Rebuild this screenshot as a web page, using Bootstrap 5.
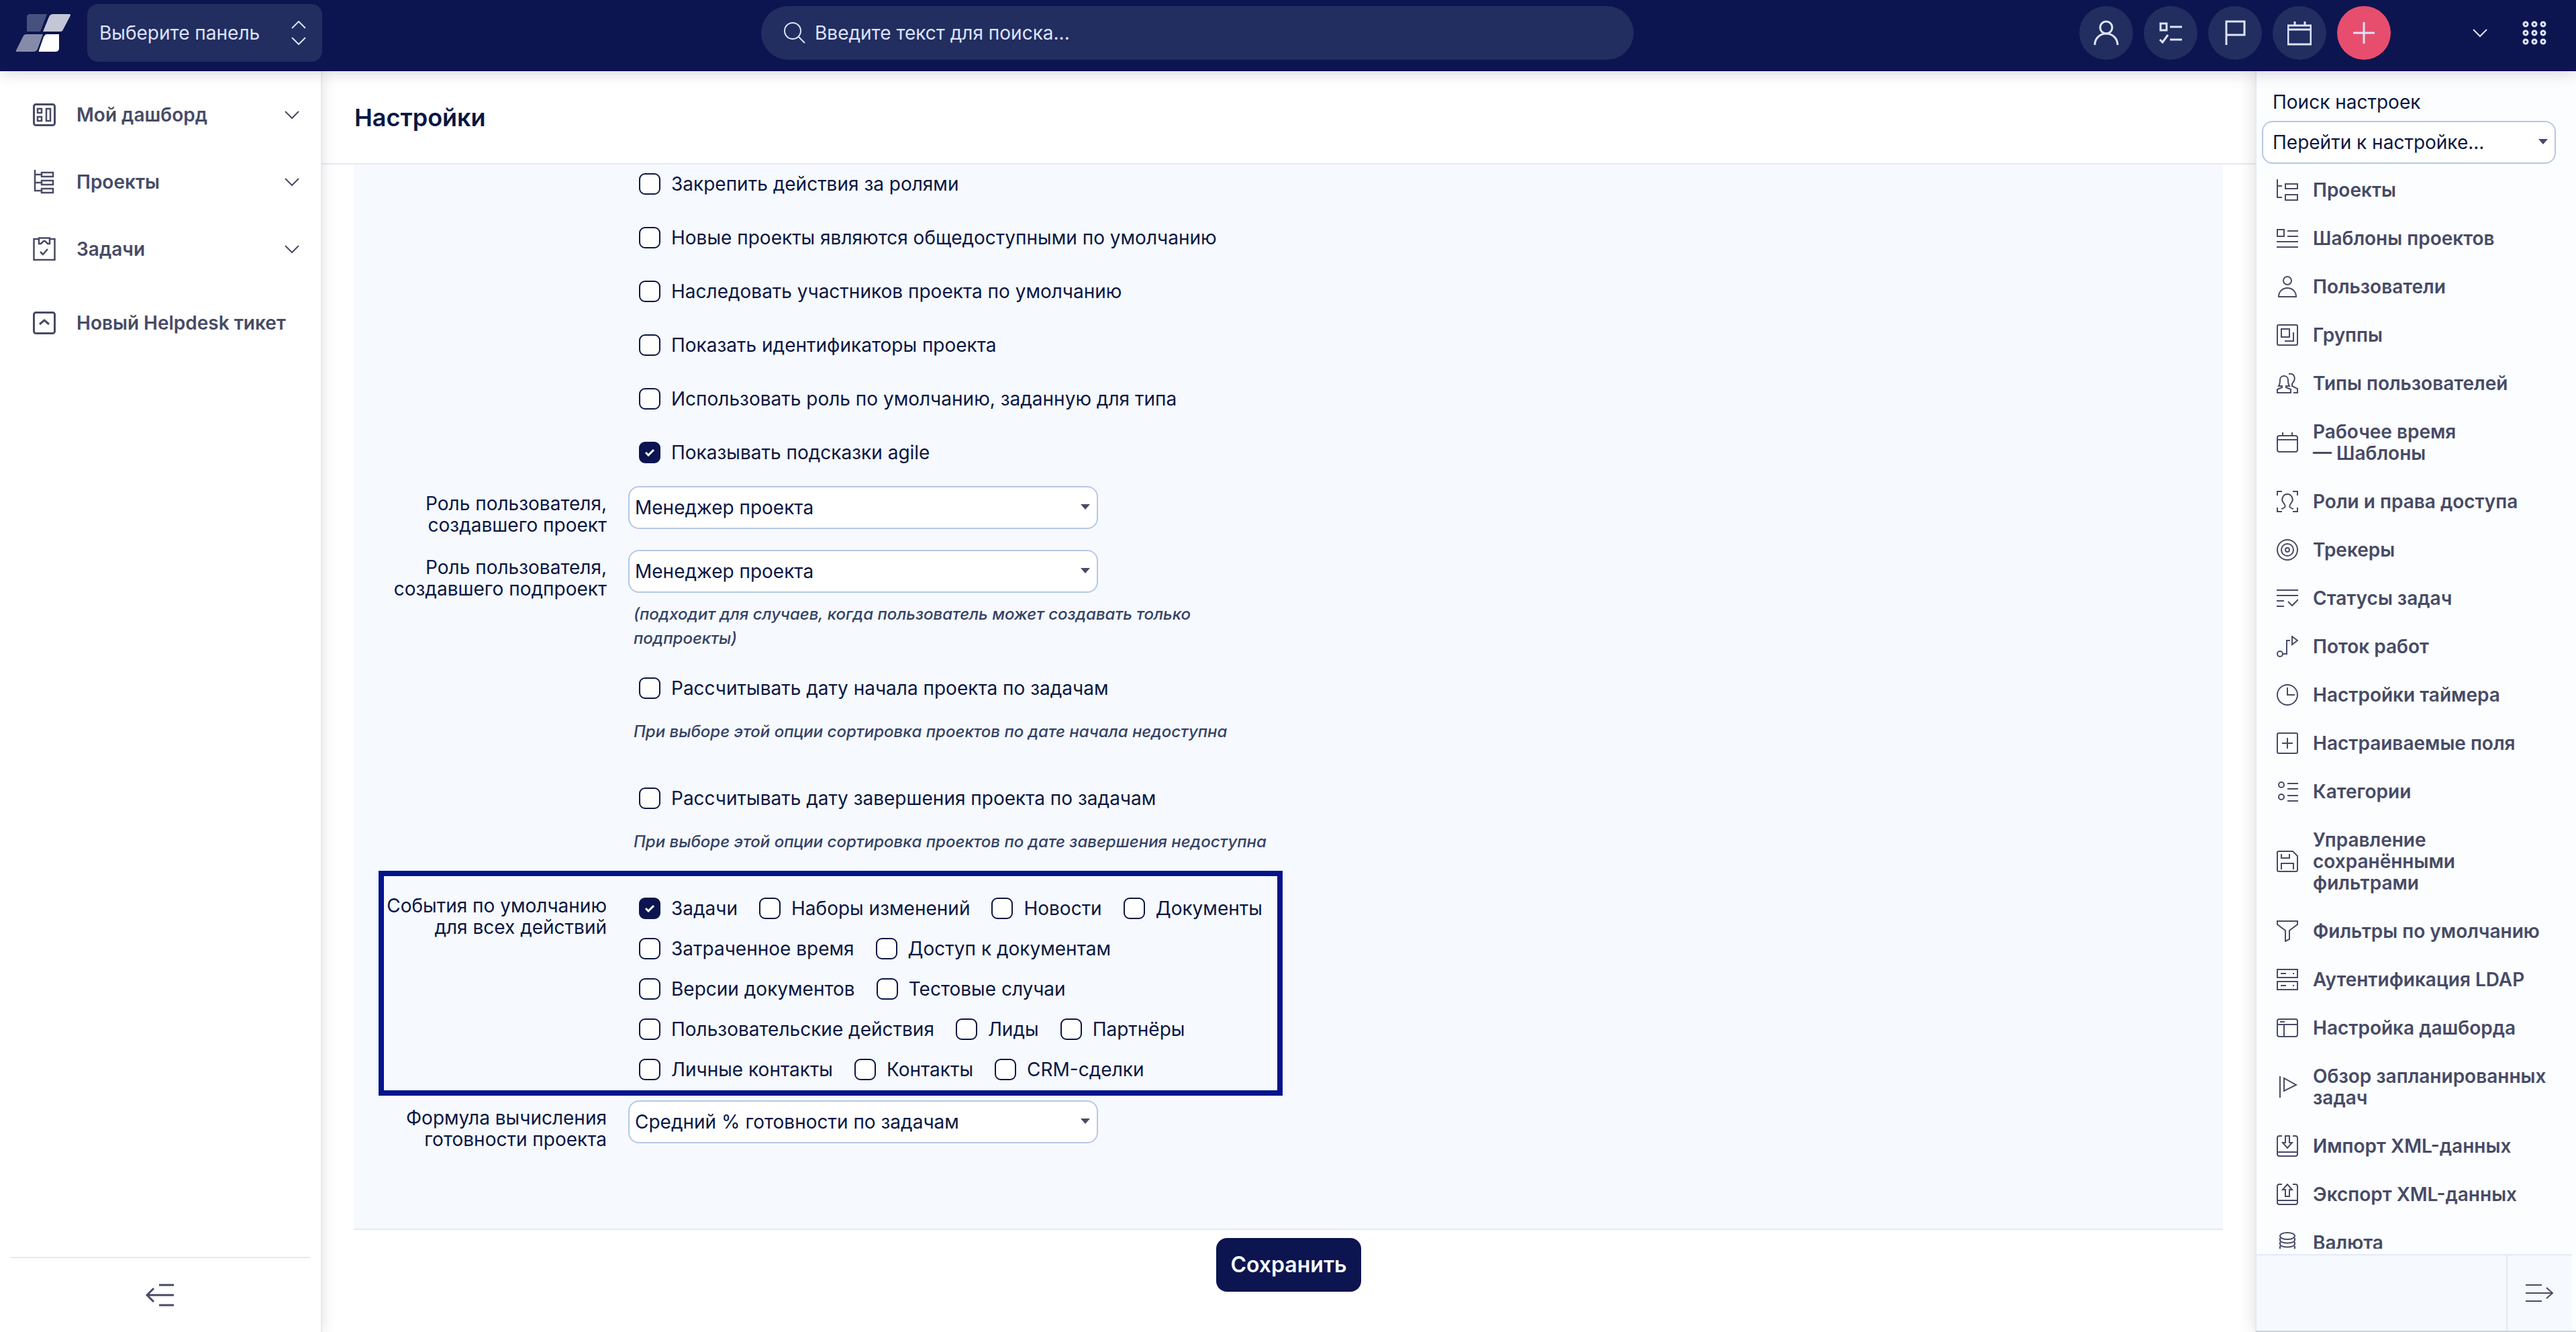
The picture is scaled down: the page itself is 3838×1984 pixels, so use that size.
<!DOCTYPE html>
<html lang="ru">
<head>
<meta charset="utf-8">
<meta name="viewport" content="width=device-width, initial-scale=1">
<title>Настройки</title>
<link href="https://cdn.jsdelivr.net/npm/bootstrap@5.3.0/dist/css/bootstrap.min.css" rel="stylesheet">
<style>
:root{--navy:#0d1550;--ink:#0a1743;--slate:#474b66;--line:#e4eaf3;--panel:#f6f9fe;--field:#b5c9e4;--ice:#dde3fb;--pill:#222d60;--regular:400;--strong:600}
body{font-family:Inter,"Liberation Sans",sans-serif;font-size:28px;line-height:32px;font-weight:var(--regular);color:var(--ink);height:100vh;overflow:hidden}
svg{fill:none;stroke:currentColor;stroke-width:2;flex:none;display:block}
a{color:inherit;text-decoration:none}
.topbar{background:var(--navy);border-bottom:2px solid #0c0752;height:106px;box-shadow:0 0 24px rgba(0,0,0,.2);z-index:3;color:var(--ice)}
.brand-zone{width:480px;padding:6px 0 12px 22px}
.board-select{width:350px;height:86px;border:0;border-radius:16px;color:var(--ice);font-size:28px;font-weight:var(--regular);padding:0 40px 0 18px;background:var(--pill) url("data:image/svg+xml,%3Csvg xmlns='http://www.w3.org/2000/svg' width='24' height='36' viewBox='0 0 24 36' fill='none' stroke='%23dde3fb' stroke-width='2'%3E%3Cpath d='M2 11 12 1l10 10M2 25l10 10 10-10'/%3E%3C/svg%3E") no-repeat right 23px center;appearance:none}
.search-zone{padding-bottom:6px}
.search-pill{width:1300px;height:80px;border-radius:40px;background:var(--pill);padding:0 32px;gap:12px}
.search-pill input{background:none;border:0;outline:0;color:var(--ice);font-weight:var(--regular)}
.search-pill input::placeholder{color:var(--ice);opacity:1}
.actions-zone{width:750px;padding:0 44px 6px 10px}
.actions-zone .account{gap:52px}
.round-btn{width:80px;height:80px;border-radius:50%;background:var(--pill);border:0;color:var(--ice);display:grid;place-items:center;padding:0}
.round-btn.add{background:#e74e6d}
.plain-btn{background:none;border:0;color:inherit;padding:0}
.side-left{width:480px;border-right:2px solid var(--line);box-shadow:0 0 20px rgba(0,0,0,.12);z-index:1;background:#fff;color:var(--slate);font-weight:var(--strong)}
.side-left .menu{padding:47px 32px 0 48px}
.menu a{height:36px;margin-bottom:64px}
.menu a:last-child{margin-top:74px}
.menu span{margin-left:30px}
.menu svg:first-child{stroke-width:3}
.side-foot{height:112px;border-top:2px solid var(--line);margin:0 16px}
.content{background:#fff}
.page-head{height:139px;border-bottom:2px solid #e5e9f5;padding-left:48px}
.page-head h1{font-size:36px;line-height:40px;font-weight:var(--strong);margin:0}
.settings{background:var(--panel);border-bottom:2px solid var(--line);margin:0 48px;padding:13px 36px 117px}
.form-line{display:grid;grid-template-columns:340px minmax(0,967px);column-gap:32px}
.form-line>.caption{text-align:right;padding-top:10px}
.form-line>.body{grid-column:2}
.tick{display:flex;align-items:center;gap:16px;height:32px}
.tick input{appearance:none;width:32px;height:32px;margin:0;border:2px solid var(--ink);border-radius:9px;background:#fff no-repeat center;flex:none}
.tick input:checked{background-color:var(--navy);border-color:var(--navy);background-image:url("data:image/svg+xml,%3Csvg xmlns='http://www.w3.org/2000/svg' width='16' height='12' viewBox='0 0 16 12' fill='none' stroke='%23fff' stroke-width='3'%3E%3Cpath d='m2 6 4 4 8-8'/%3E%3C/svg%3E")}
.tick-list{display:grid;gap:48px;margin-bottom:34px}
.tick-single,.tick-list,.tick-wrap{padding-left:16px}
.tick-wrap{display:flex;flex-wrap:wrap;gap:28px 32px}
.pick{width:100%;height:64px;border:2px solid var(--field);border-radius:16px;color:var(--ink);font-size:28px;font-weight:var(--regular);padding:0 40px 0 8px;appearance:none;background:#fff url("data:image/svg+xml,%3Csvg xmlns='http://www.w3.org/2000/svg' width='14' height='8'%3E%3Cpath d='M0 0h14L7 8z' fill='%23474b66'/%3E%3C/svg%3E") no-repeat right 10px top 25px}
.body>.pick{max-width:700px}
.hint{font-size:24px;line-height:36px;font-style:italic;font-weight:500;color:#344266;margin:0;padding-left:8px}
.pick+.hint{margin-top:14px}
.tick+.hint{margin-top:31px}
.line-role{margin-bottom:21px}
.line-subrole{margin-bottom:40px}
.line-start{margin-bottom:65px}
.marked{box-shadow:inset 0 0 0 8px #03148c;padding:36px 0 23px;margin:25px 0 7px;max-width:1347px}
.marked>.caption{padding-top:0}
.marked .tick-wrap{margin-top:4px}
.save-btn{background:var(--navy);color:#f7faff;border:0;border-radius:16px;height:80px;padding:0 21px;font-size:32px;font-weight:var(--strong);margin-top:12px}
.side-right{width:478px;border-left:2px solid var(--line);border-bottom:2px solid #cdd1d7;box-shadow:0 0 24px rgba(0,0,0,.15);background:#fcfdff;z-index:1}
.jump{padding:30px 30px 0 8px}
.jump label{padding-left:16px;margin-bottom:12px;display:block}
.jump .pick{padding-left:14px}
.admin-list{min-height:0;overflow:hidden;margin:3px 24px 8px 30px;color:var(--slate);font-weight:var(--strong)}
.admin-list a{display:flex;align-items:center;gap:22px;padding:20px 0}
.right-foot{height:114px;border-top:2px solid var(--line);background:var(--panel);margin-right:6px;color:var(--slate)}
.right-foot button{width:98px;border-left:2px solid var(--line)}
</style>
<script src="https://cdn.jsdelivr.net/npm/bootstrap@5.3.0/dist/js/bootstrap.bundle.min.js" defer></script>
</head>
<body class="d-flex flex-column">
<header class="topbar d-flex align-items-stretch position-relative flex-shrink-0">
  <div class="brand-zone d-flex align-items-center justify-content-between">
    <a href="#" aria-label="Главная"><svg width="84" height="60" viewBox="0 0 84 60"><g stroke="none"><path d="M23 2h25L38 28H18V7q0-5 5-5z" fill="#475180"/><path d="M57 2h25q1 0 1 2L72 25q-1 3-4 3H42l9-22q2-4 6-4z" fill="#c3c6d6"/><path d="M17 32h25L34 54q-2 4-6 4H3q-2 0-1-2l10-20q2-4 5-4z" fill="#868baa"/><path d="M48 32h18v21q0 5-6 5H37q-2 0-1-2l7-20q2-4 5-4z" fill="#fff"/></g></svg></a>
    <select class="board-select" aria-label="Панель"><option>Выберите панель</option></select>
  </div>
  <div class="search-zone d-flex flex-grow-1 justify-content-center align-items-center">
    <div class="search-pill d-flex align-items-center">
      <svg width="34" height="34" viewBox="0 0 34 34"><circle cx="15" cy="14" r="12"/><path d="m24 23 9 9"/></svg>
      <input class="flex-grow-1" type="search" aria-label="Поиск" placeholder="Введите текст для поиска...">
    </div>
  </div>
  <div class="actions-zone d-flex align-items-center flex-shrink-0">
    <div class="d-flex gap-3">
      <button class="round-btn" aria-label="Профиль"><svg width="40" height="40" viewBox="0 0 40 40"><g stroke-width="3"><circle cx="20" cy="12" r="9"/><path d="M3 38c0-9 7-17 17-17s17 8 17 17"/></g></svg></button>
      <button class="round-btn" aria-label="Список"><svg width="36" height="36" viewBox="0 0 36 36"><path stroke-width="3" d="M3 4h9v10H3zM17 9h18M17 28h18M2 28l4 4 8-11"/></svg></button>
      <button class="round-btn" aria-label="Флаг"><svg width="34" height="40" viewBox="0 0 34 40"><path stroke-width="3" d="M4 38V3h27v20H4"/></svg></button>
      <button class="round-btn" aria-label="Календарь"><svg width="36" height="40" viewBox="0 0 36 40"><path d="M1 9h34v28H1zM1 15h34M11 3v6M26 3v6" stroke-width="3"/></svg></button>
      <button class="round-btn add" aria-label="Добавить"><svg width="34" height="34" viewBox="0 0 34 34"><path d="M17 1v32M1 17h32" stroke-width="3"/></svg></button>
    </div>
    <div class="account d-flex align-items-center justify-content-end flex-grow-1">
      <button class="plain-btn" aria-label="Аккаунт"><svg width="22" height="14" viewBox="0 0 22 14"><path d="m1 2 10 10L21 2"/></svg></button>
      <button class="plain-btn" aria-label="Приложения"><svg width="36" height="36" viewBox="0 0 36 36"><g id="dots" stroke-width="3"><circle cx="5" cy="5" r="3"/><circle cx="18" cy="5" r="3"/><circle cx="31" cy="5" r="3"/></g><use href="#dots" y="13"/><use href="#dots" y="26"/></svg></button>
    </div>
  </div>
</header>
<div class="d-flex flex-grow-1 overflow-hidden">
  <aside class="side-left d-flex flex-column flex-shrink-0">
    <nav class="menu flex-grow-1">
      <a href="#" class="d-flex align-items-center"><svg width="36" height="36" viewBox="0 0 36 36"><rect x="2.500" y="2.500" width="31" height="31" rx="3"/><path d="M8 9h6v6H8zM8 21h6v6H8zM21 9h6v18h-6z" stroke-width="2.500"/></svg><span class="flex-grow-1">Мой дашборд</span><svg width="22" height="14" viewBox="0 0 22 14"><path d="m1 2 10 10L21 2"/></svg></a>
      <a href="#" class="d-flex align-items-center"><svg width="36" height="36" viewBox="0 0 36 36"><path d="M4 0v31h10M4 7h10M4 19h10M14 4h17v6H14zM14 16h17v6H14zM14 28h17v6H14z" stroke-width="2.500"/></svg><span class="flex-grow-1">Проекты</span><svg width="22" height="14" viewBox="0 0 22 14"><path d="m1 2 10 10L21 2"/></svg></a>
      <a href="#" class="d-flex align-items-center"><svg width="36" height="36" viewBox="0 0 36 36"><path d="M10 3H2.500v31h31V3H26M10 1.500h16V10h-3l-4-4h-2l-4 4h-3zM12 22l4 4 7-8" stroke-width="2.500"/></svg><span class="flex-grow-1">Задачи</span><svg width="22" height="14" viewBox="0 0 22 14"><path d="m1 2 10 10L21 2"/></svg></a>
      <a href="#" class="d-flex align-items-center"><svg width="36" height="36" viewBox="0 0 36 36"><rect x="2.500" y="2.500" width="31" height="31" rx="3"/><path d="m11 20 7-6 7 6"/></svg><span class="flex-grow-1">Новый Helpdesk тикет</span></a>
    </nav>
    <div class="side-foot d-flex justify-content-center align-items-center"><button class="plain-btn" aria-label="Свернуть меню"><svg width="44" height="36" viewBox="0 0 44 36"><path d="M20 3h22M20 33h22M3 18h39M12 8 2 18l10 10" stroke-width="3"/></svg></button></div>
  </aside>
  <main class="content flex-grow-1 overflow-hidden">
    <div class="page-head d-flex align-items-center"><h1>Настройки</h1></div>
    <form>
      <div class="settings">
        <div class="form-line"><div class="body tick-list">
          <label class="tick"><input type="checkbox">Закрепить действия за ролями</label>
          <label class="tick"><input type="checkbox">Новые проекты являются общедоступными по умолчанию</label>
          <label class="tick"><input type="checkbox">Наследовать участников проекта по умолчанию</label>
          <label class="tick"><input type="checkbox">Показать идентификаторы проекта</label>
          <label class="tick"><input type="checkbox">Использовать роль по умолчанию, заданную для типа</label>
          <label class="tick"><input type="checkbox" checked>Показывать подсказки agile</label>
        </div></div>
        <div class="form-line line-role"><label class="caption" for="role1">Роль пользователя,<br>создавшего проект</label><div class="body"><select class="pick" id="role1"><option>Менеджер проекта</option></select></div></div>
        <div class="form-line line-subrole"><label class="caption" for="role2">Роль пользователя,<br>создавшего подпроект</label><div class="body"><select class="pick" id="role2"><option>Менеджер проекта</option></select><p class="hint">(подходит для случаев, когда пользователь может создавать только<br>подпроекты)</p></div></div>
        <div class="form-line line-start"><div class="body"><label class="tick tick-single"><input type="checkbox">Рассчитывать дату начала проекта по задачам</label><p class="hint">При выборе этой опции сортировка проектов по дате начала недоступна</p></div></div>
        <div class="form-line"><div class="body"><label class="tick tick-single"><input type="checkbox">Рассчитывать дату завершения проекта по задачам</label><p class="hint">При выборе этой опции сортировка проектов по дате завершения недоступна</p></div></div>
        <div class="form-line marked" role="group" aria-labelledby="events-caption"><div class="caption" id="events-caption">События по умолчанию<br>для всех действий</div>
          <div class="body tick-wrap">
            <label class="tick"><input type="checkbox" checked>Задачи</label>
            <label class="tick"><input type="checkbox">Наборы изменений</label>
            <label class="tick"><input type="checkbox">Новости</label>
            <label class="tick"><input type="checkbox">Документы</label>
            <label class="tick"><input type="checkbox">Затраченное время</label>
            <label class="tick"><input type="checkbox">Доступ к документам</label>
            <label class="tick"><input type="checkbox">Версии документов</label>
            <label class="tick"><input type="checkbox">Тестовые случаи</label>
            <label class="tick"><input type="checkbox">Пользовательские действия</label>
            <label class="tick"><input type="checkbox">Лиды</label>
            <label class="tick"><input type="checkbox">Партнёры</label>
            <label class="tick"><input type="checkbox">Личные контакты</label>
            <label class="tick"><input type="checkbox">Контакты</label>
            <label class="tick"><input type="checkbox">CRM-сделки</label>
          </div></div>
        <div class="form-line"><label class="caption" for="formula">Формула вычисления<br>готовности проекта</label><div class="body"><select class="pick" id="formula"><option>Средний % готовности по задачам</option></select></div></div>
      </div>
      <div class="d-flex justify-content-center"><button type="button" class="save-btn">Сохранить</button></div>
    </form>
  </main>
  <aside class="side-right d-flex flex-column flex-shrink-0">
    <div class="jump"><label for="jump">Поиск настроек</label><select class="pick" id="jump"><option>Перейти к настройке...</option></select></div>
    <nav class="admin-list flex-grow-1">
      <a href="#"><svg width="32" height="32" viewBox="0 0 32 32"><path d="M1 0v27h7M1 10h7M13 7h18v7H13zM13 23h18v8H13z"/></svg>Проекты</a>
      <a href="#"><svg width="32" height="32" viewBox="0 0 32 32"><path d="M1 3h10v10H1zM16 5h16M16 13h16M0 21h32M0 29h32"/></svg>Шаблоны проектов</a>
      <a href="#"><svg width="32" height="32" viewBox="0 0 32 32"><circle cx="16" cy="7" r="6"/><path d="M3 31h26c0-7-5-13-13-13S3 24 3 31z"/></svg>Пользователи</a>
      <a href="#"><svg width="32" height="32" viewBox="0 0 32 32"><rect x="1" y="1" width="30" height="30" rx="2"/><path d="M7 7h12v12H7zM25 12v13H12"/></svg>Группы</a>
      <a href="#"><svg width="32" height="32" viewBox="0 0 32 32"><path d="M1 30v-5l7-3v-2H3c2-3 2-6 2-9 0-8 12-8 12 0 0 3 0 6 2 9h-5v2l7 3v5zM18 2c9-2 11 8 6 13l-1 2v3l8 4v6h-6"/></svg>Типы пользователей</a>
      <a href="#"><svg width="32" height="32" viewBox="0 0 32 32"><rect x="1" y="6" width="30" height="24" rx="3"/><path d="M1 12h30M9 1v5M23 1v5"/></svg><span>Рабочее время<br>— Шаблоны</span></a>
      <a href="#"><svg width="32" height="32" viewBox="0 0 32 32"><path d="M8 1H1v6M24 1h7v6M8 31H1v-6M24 31h7v-6M7 27c8-2 6-5 4-8-6-6-1-14 5-14s11 8 5 14c-2 3-4 6 4 8"/></svg>Роли и права доступа</a>
      <a href="#"><svg width="32" height="32" viewBox="0 0 32 32"><circle cx="16" cy="16" r="15"/><circle cx="16" cy="16" r="9"/><circle cx="16" cy="16" r="3"/></svg>Трекеры</a>
      <a href="#"><svg width="32" height="32" viewBox="0 0 32 32"><path d="M0 4h32M0 12h32M0 20h11M0 28h11M17 21l6 6 9-9"/></svg>Статусы задач</a>
      <a href="#"><svg width="32" height="32" viewBox="0 0 32 32"><circle cx="5" cy="27" r="4"/><path d="M9 27h6V7h5M23 1v12l8-6z"/></svg>Поток работ</a>
      <a href="#"><svg width="32" height="32" viewBox="0 0 32 32"><circle cx="16" cy="16" r="15"/><path d="M16 5v11h11"/></svg>Настройки таймера</a>
      <a href="#"><svg width="32" height="32" viewBox="0 0 32 32"><rect x="1" y="1" width="30" height="30" rx="2"/><path d="M16 8v16M8 16h16"/></svg>Настраиваемые поля</a>
      <a href="#"><svg width="32" height="32" viewBox="0 0 32 32"><circle cx="7" cy="6" r="4"/><circle cx="7" cy="24" r="4"/><path d="M16 4h16M16 12h16M16 22h16M16 30h16"/></svg>Категории</a>
      <a href="#"><svg width="32" height="32" viewBox="0 0 32 32"><path d="M3 1h21l7 7v21q0 2-2 2H3q-2 0-2-2V3q0-2 2-2zM7 5v6h12V5M7 28v-9h18v9"/></svg><span>Управление сохранёнными фильтрами</span></a>
      <a href="#"><svg width="32" height="32" viewBox="0 0 32 32"><path d="M1 1h30v5l-12 9v13l-6 3V15L1 6z"/></svg>Фильтры по умолчанию</a>
      <a href="#"><svg width="32" height="32" viewBox="0 0 32 32"><path d="M1 1h30v12H1zM1 19h30v12H1zM6 7h8M24 7h2M6 25h8M24 25h2"/></svg>Аутентификация LDAP</a>
      <a href="#"><svg width="32" height="32" viewBox="0 0 32 32"><rect x="1" y="3" width="30" height="26" rx="3"/><path d="M1 11h30M11 11v18M5 7h7"/></svg>Настройка дашборда</a>
      <a href="#"><svg width="32" height="32" viewBox="0 0 32 32"><path d="M5 0v32M11 3v19l18-9z"/></svg><span>Обзор запланированных задач</span></a>
      <a href="#"><svg width="32" height="32" viewBox="0 0 32 32"><path d="M8 1H4Q1 1 1 4v24q0 3 3 3h24q3 0 3-3V4q0-3-3-3h-4M1 25h30M13 1v10H9l7 8 7-8h-4V1z"/></svg>Импорт XML-данных</a>
      <a href="#"><svg width="32" height="32" viewBox="0 0 32 32"><path d="M8 1H4Q1 1 1 4v24q0 3 3 3h24q3 0 3-3V4q0-3-3-3h-4M1 25h30M13 19V9H9l7-8 7 8h-4v10z"/></svg>Экспорт XML-данных</a>
      <a href="#"><svg width="32" height="32" viewBox="0 0 32 32"><ellipse cx="16" cy="6" rx="11" ry="5"/><path d="M5 9v3c0 6 22 6 22 0V9M5 15v3c0 6 22 6 22 0v-3M5 21v3c0 6 22 6 22 0v-3"/></svg>Валюта</a>
    </nav>
    <div class="right-foot d-flex justify-content-end flex-shrink-0"><button class="plain-btn d-flex justify-content-center align-items-center" aria-label="Скрыть панель"><svg width="44" height="36" viewBox="0 0 44 36"><path d="M1 6h24M1 30h24M1 18h40M32 10l9 8-9 8"/></svg></button></div>
  </aside>
</div>
</body>
</html>
